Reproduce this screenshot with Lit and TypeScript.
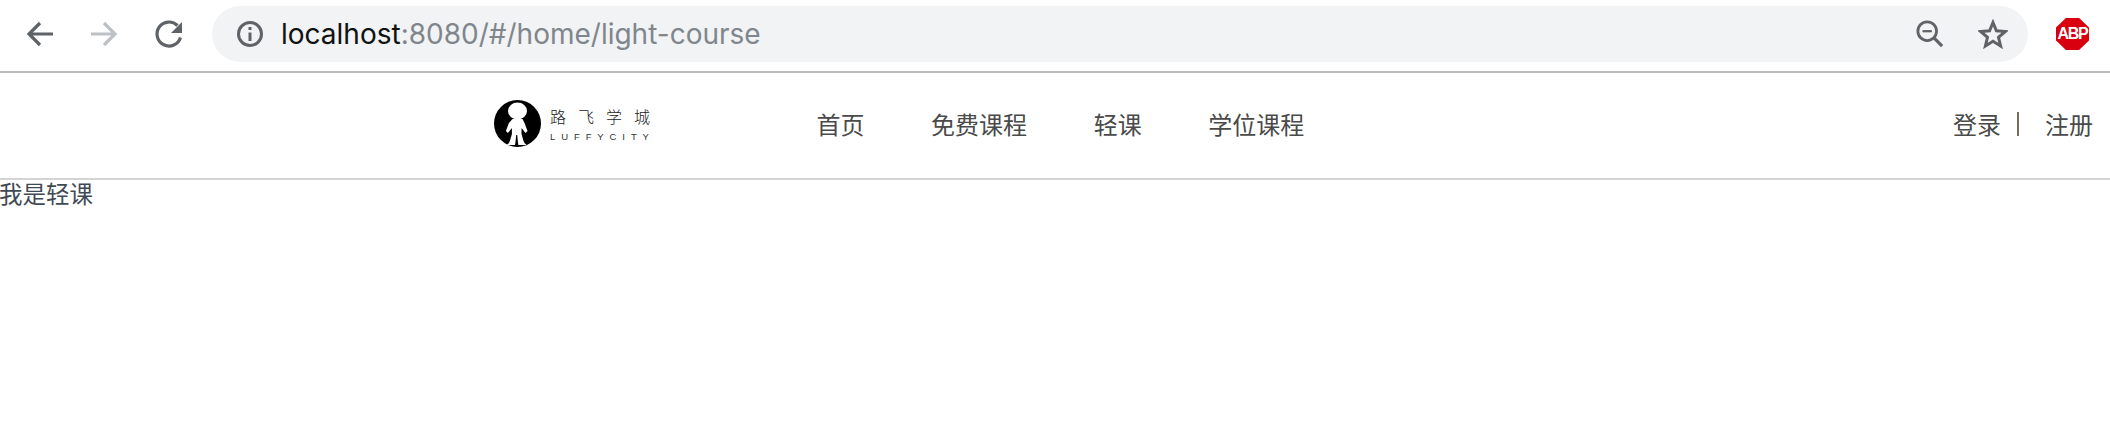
import { LitElement, html, css } from "lit";
import { customElement } from "lit/decorators.js";

@customElement("app-root")
export class AppRoot extends LitElement {
  static styles = css`
    :host { display: block; width: 2110px; height: 432px; background: #fff; overflow: hidden; font-family: "Noto Sans CJK SC", "Liberation Sans", sans-serif; }
    .chrome { height: 68px; padding-bottom: 3px; display: flex; align-items: center; border-bottom: 2px solid #b9b9b9; box-sizing: content-box; }
    .navbtns { display: flex; align-items: center; width: 212px; padding-left: 24px; gap: 24px; box-sizing: border-box; flex: none; }
    .navbtns svg { width: 40px; height: 36px; display: block; flex: none; }
    .omni { flex: none; width: 1816px; height: 56px; background: #f1f3f4; border-radius: 28px; display: flex; align-items: center; padding: 0 24px; box-sizing: border-box; }
    .omni svg { display: block; flex: none; }
    .url { font-family: Inter, "Liberation Sans", sans-serif; font-size: 28px; color: #80868b; margin-left: 17px; flex: 1; }
    .url b { font-weight: 400; color: #111; }
    .omni .zoom { margin-right: 34px; }
    .omni .star { margin-right: -4px; }
    .abp { margin-left: 28px; width: 33px; height: 32px; flex: none; background: #d8000f; clip-path: polygon(30% 0, 70% 0, 100% 30%, 100% 70%, 70% 100%, 30% 100%, 0 70%, 0 30%); color: #fff; font: 700 16px/32px "Liberation Sans", sans-serif; text-align: center; letter-spacing: -1.2px; }

    .header { height: 101px; padding: 0 17px 4px 494px; border-bottom: 2px solid #d4d4d4; display: flex; align-items: center; box-sizing: content-box; color: #4a4a4a; font-size: 24px; }
    .logo { display: flex; align-items: center; gap: 9px; width: 322.5px; flex: none; }
    .logo svg { display: block; flex: none; }
    .ltext { display: flex; flex-direction: column; color: #222; }
    .cn { font-size: 16px; line-height: 20px; letter-spacing: 12px; white-space: nowrap; font-weight: 300; }
    .en { font: 400 9.5px/10px "Liberation Sans", sans-serif; letter-spacing: 5.9px; margin-top: 6px; white-space: nowrap; color: #333; }
    nav { display: flex; gap: 66.6px; flex: 1; }
    nav span, .auth span { line-height: 34px; white-space: nowrap; }
    .auth { display: flex; align-items: center; }
    .sep { width: 2px; height: 24px; background: #7b6a5e; margin: 0 26px 0 16px; }
    .content { color: #3f4a55; font-size: 23.5px; line-height: 26px; height: 26px; margin-left: -1px; white-space: nowrap; }
  `;

  render() {
    return html`
      <div class="chrome">
        <div class="navbtns">
          <svg viewBox="4 0 40 36" fill="none" stroke="#5f6368" stroke-width="3.2"><path d="M33 18H10M20 7 9 18l11 11"/></svg>
          <svg viewBox="5 0 40 36" fill="none" stroke="#bdc1c6" stroke-width="3.2"><path d="M8 18h24M21 7l11 11-11 11"/></svg>
          <svg viewBox="3 0 40 36" fill="none" stroke="#5f6368" stroke-width="3.2"><path d="M28.5 9.5A12 12 0 1 0 31.5 21.5"/><path d="M33 6v11H22z" fill="#5f6368" stroke="none"/></svg>
        </div>
        <div class="omni">
          <svg width="28" height="28" viewBox="0 0 28 28" fill="none" stroke="#5f6368" stroke-width="3"><circle cx="14" cy="14" r="11.5"/><path d="M14 12.5V21" /><path d="M14 7v3"/></svg>
          <div class="url"><b>localhost</b>:8080/#/home/light-course</div>
          <svg class="zoom" width="28" height="28" viewBox="0 0 30 30" fill="none" stroke="#5f6368" stroke-width="3"><circle cx="12" cy="12" r="10"/><path d="M7 12h10" stroke-width="2.4"/><path d="M19.5 19.5 28 28" stroke-width="3.4"/></svg>
          <svg class="star" width="30" height="30" viewBox="0 0 30 30" fill="none" stroke="#5f6368" stroke-width="3"><path d="M15 3.5l3.4 8.3 8.9.7-6.8 5.8 2.1 8.7-7.6-4.7-7.6 4.7 2.1-8.7-6.8-5.8 8.9-.7z"/></svg>
        </div>
        <div class="abp">ABP</div>
      </div>
      <div class="header">
        <div class="logo">
          <svg width="47" height="47" viewBox="0 0 47 47">
            <circle cx="23.5" cy="23.5" r="23.5" fill="#000"/>
            <ellipse cx="23.5" cy="11" rx="9.5" ry="8.5" fill="#fff"/>
            <path d="M18.5 19h10l2 4 3 8-2 2-4-5v6l2 7 1 2 2 2h-8l-.5-2-.8-8h-1l-.8 8-.5 2h-8l2-2 1-2 2-7v-6l-4 5-2-2 3-8z" fill="#fff"/>
          </svg>
          <div class="ltext">
            <div class="cn">路飞学城</div>
            <div class="en">LUFFYCITY</div>
          </div>
        </div>
        <nav>
          <span>首页</span><span>免费课程</span><span>轻课</span><span>学位课程</span>
        </nav>
        <div class="auth"><span>登录</span><i class="sep"></i><span>注册</span></div>
      </div>
      <div class="content">我是轻课</div>
    `;
  }
}
